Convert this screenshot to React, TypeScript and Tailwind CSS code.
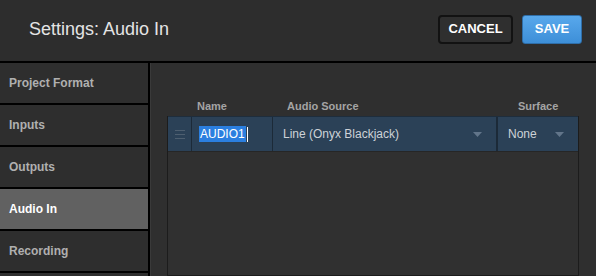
import React from 'react';

const sections = ['Project Format', 'Inputs', 'Outputs', 'Audio In', 'Recording', ''];

function Caret() {
  return (
    <svg width="9" height="5" viewBox="0 0 9 5" className="shrink-0">
      <path d="M0 0 L9 0 L4.5 5 Z" fill="#62758a" />
    </svg>
  );
}

export default function App() {
  return (
    <div
      className="w-[596px] h-[276px] overflow-hidden bg-black flex flex-col"
      style={{ fontFamily: '"Liberation Sans", Arial, sans-serif' }}
    >
      {/* Header */}
      <div className="h-[61px] shrink-0 bg-[#2d2d2d] flex items-center pl-[29px] pr-[14px]">
        <h1 className="text-[18px] text-[#e4e4e4] leading-none flex-1 -mt-[3px]">
          Settings: Audio In
        </h1>
        <button className="w-[75px] h-[29px] rounded-[4px] border-2 border-[#121212] bg-[#2f2f2f] text-white font-bold text-[13px] mr-[9px] -mt-[3px]">
          CANCEL
        </button>
        <button className="w-[60px] h-[29px] rounded-[3px] border border-[#2f6ea8] bg-gradient-to-b from-[#58a8ec] to-[#3d8fd8] text-white font-bold text-[13px] -mt-[3px]">
          SAVE
        </button>
      </div>

      <div className="flex flex-1 mt-[2px] min-h-0">
        {/* Sidebar */}
        <div className="w-[148px] shrink-0 flex flex-col gap-[2px]">
          {sections.map((s, i) => (
            <div
              key={i}
              className={`h-[40px] shrink-0 flex items-center pl-[9px] text-[12px] font-bold ${
                s === 'Audio In' ? 'bg-[#616161] text-white' : 'bg-[#2e2e2e] text-[#b0b0b0]'
              }`}
            >
              {s}
            </div>
          ))}
        </div>

        {/* Content */}
        <div className="flex-1 ml-[2px] bg-[#2f2f2f] border-l border-[#3a3a3a] pl-[16px] pr-[17px] pt-[33px] flex flex-col">
          <div className="flex h-[20px] items-center text-[11px] font-bold text-[#a4a4a4]">
            <div className="w-[24px]" />
            <div className="w-[81px] pl-[6px]">Name</div>
            <div className="w-[225px] pl-[15px]">Audio Source</div>
            <div className="flex-1 pl-[21px]">Surface</div>
          </div>
          <div className="flex-1 border border-[#1c1c1c] border-t-0 flex flex-col">
            <div className="h-[35px] flex bg-[#2b4157] border-t border-[#1e2d3c] text-[12px] text-[#cdd2d7]">
              <div className="w-[24px] border-r border-[#1c2a38] flex flex-col items-center justify-center gap-[3px]">
                <div className="w-[10px] h-px bg-[#4e5f70]" />
                <div className="w-[10px] h-px bg-[#4e5f70]" />
                <div className="w-[10px] h-px bg-[#4e5f70]" />
              </div>
              <div className="w-[81px] border-r border-[#1c2a38] flex items-center pl-[7px]">
                <span className="bg-[#2b7fe0] text-white px-[1px] leading-[16px]">AUDIO1</span>
                <span className="w-px h-[15px] bg-white ml-[1px]" />
              </div>
              <div className="w-[225px] border-r-2 border-[#1c2a38] flex items-center pl-[10px] pr-[14px]">
                <span className="flex-1">Line (Onyx Blackjack)</span>
                <Caret />
              </div>
              <div className="flex-1 flex items-center pl-[10px] pr-[14px]">
                <span className="flex-1">None</span>
                <Caret />
              </div>
            </div>
            <div className="flex-1 border-t border-[#262626] bg-[#303030]" />
          </div>
        </div>
      </div>
    </div>
  );
}
